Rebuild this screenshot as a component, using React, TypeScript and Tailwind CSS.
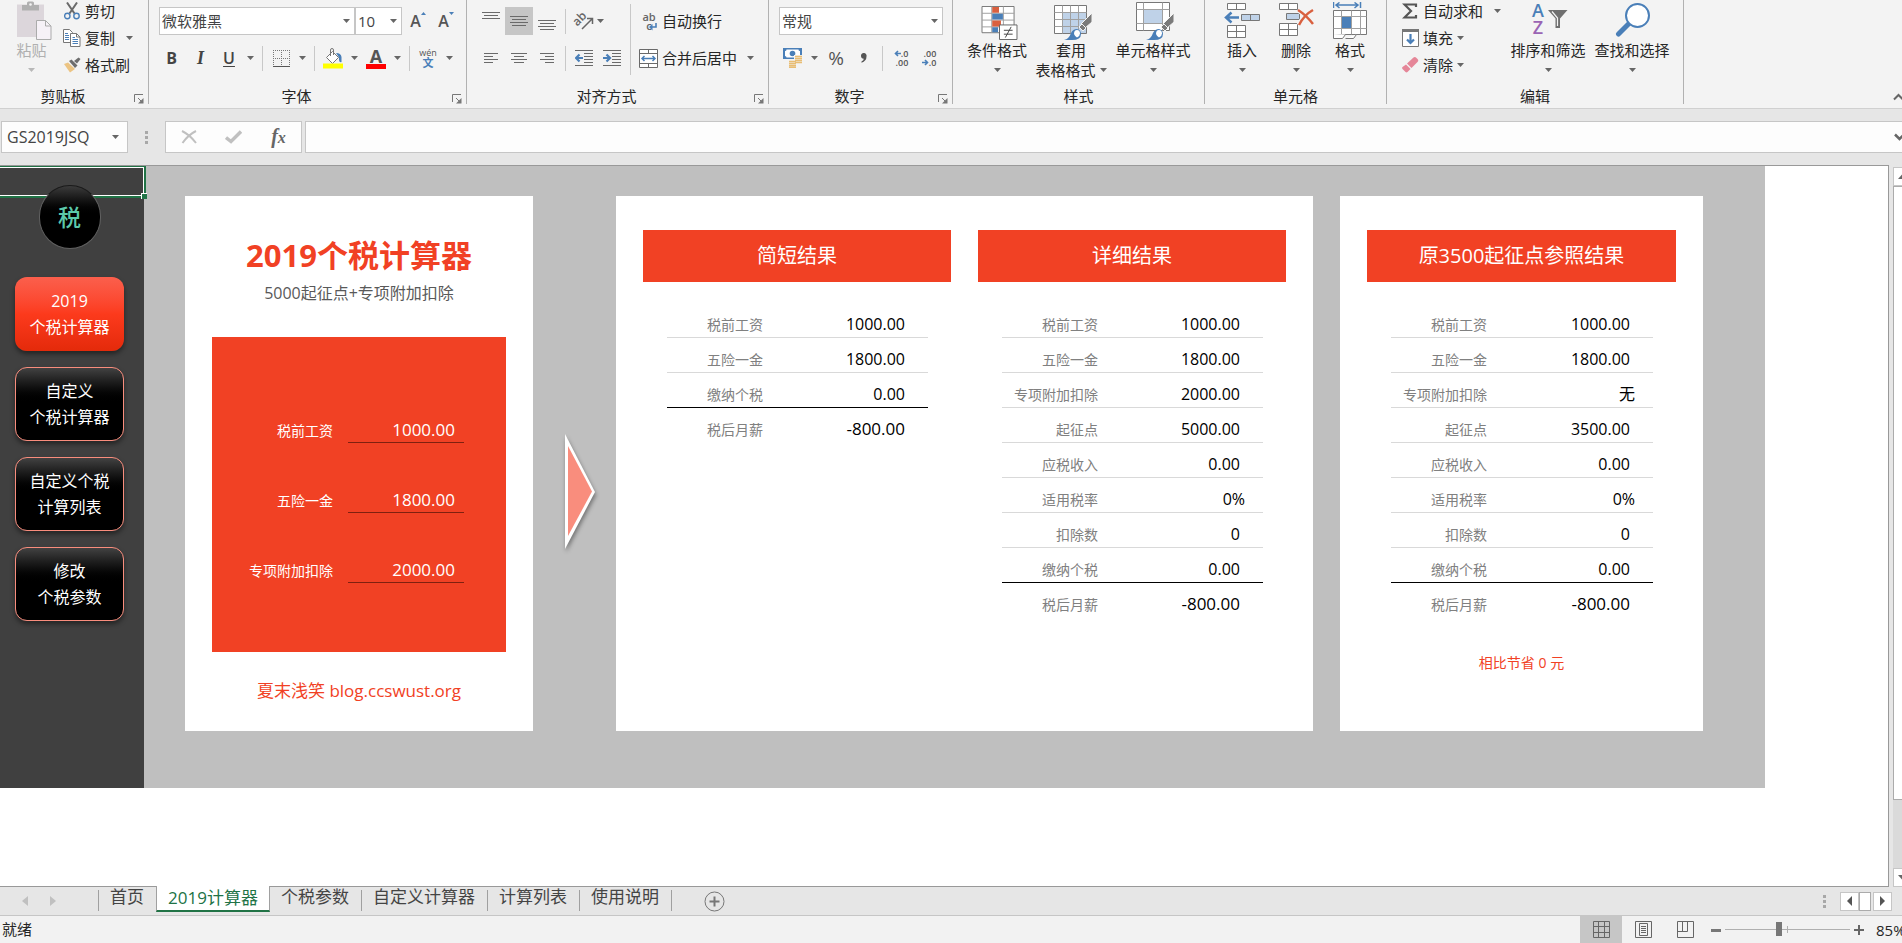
import type { ReactNode } from "react";

type Row = { label: string; value: string; kind?: "plain" | "total" };

const briefRows: Row[] = [
  { label: "税前工资", value: "1000.00" },
  { label: "五险一金", value: "1800.00" },
  { label: "缴纳个税", value: "0.00" },
  { label: "税后月薪", value: "-800.00", kind: "total" },
];

const detailRows: Row[] = [
  { label: "税前工资", value: "1000.00" },
  { label: "五险一金", value: "1800.00" },
  { label: "专项附加扣除", value: "2000.00" },
  { label: "起征点", value: "5000.00" },
  { label: "应税收入", value: "0.00" },
  { label: "适用税率", value: "0%", kind: "plain" },
  { label: "扣除数", value: "0" },
  { label: "缴纳个税", value: "0.00" },
  { label: "税后月薪", value: "-800.00", kind: "total" },
];

const oldRows: Row[] = [
  { label: "税前工资", value: "1000.00" },
  { label: "五险一金", value: "1800.00" },
  { label: "专项附加扣除", value: "无", kind: "plain" },
  { label: "起征点", value: "3500.00" },
  { label: "应税收入", value: "0.00" },
  { label: "适用税率", value: "0%", kind: "plain" },
  { label: "扣除数", value: "0" },
  { label: "缴纳个税", value: "0.00" },
  { label: "税后月薪", value: "-800.00", kind: "total" },
];

const inputs = [
  { id: "salary", label: "税前工资", value: "1000.00" },
  { id: "insurance", label: "五险一金", value: "1800.00" },
  { id: "deduction", label: "专项附加扣除", value: "2000.00" },
];

const navItems = [
  { lines: ["2019", "个税计算器"], active: true },
  { lines: ["自定义", "个税计算器"], active: false },
  { lines: ["自定义个税", "计算列表"], active: false },
  { lines: ["修改", "个税参数"], active: false },
];

const sheets = ["首页", "2019计算器", "个税参数", "自定义计算器", "计算列表", "使用说明"];

/* ---------- ribbon primitives ---------- */

function Caret({ light = false }: { light?: boolean }) {
  return (
    <svg className={light ? "h-1 w-[7px] shrink-0 text-[#b8b8b8]" : "h-1 w-[7px] shrink-0 text-[#666]"} viewBox="0 0 7 4" aria-hidden="true">
      <path d="M0 0h7L3.5 4z" fill="currentColor" />
    </svg>
  );
}

function Group({ label, width, launcher = false, children }: { label: string; width: string; launcher?: boolean; children: ReactNode }) {
  return (
    <section className={`flex h-[104px] shrink-0 flex-col justify-between border-r border-[#b1b1b1] ${width}`} aria-label={label}>
      {children}
      <div className="flex h-[15px]">
        <h2 className="flex-1 text-center leading-[14px]">{label}</h2>
        {launcher && (
          <button type="button" aria-label={`${label}设置`} className="flex w-[22px] items-end justify-end pr-1">
            <svg width="10" height="10" viewBox="0 0 10 10" fill="none" stroke="#777" aria-hidden="true">
              <path d="M.5 8V.5H9M4 4l4 4" />
              <path d="M9.5 4v5.5H4z" fill="#777" stroke="none" />
            </svg>
          </button>
        )}
      </div>
    </section>
  );
}

function Tool({ label, wide = false, pressed = false, children }: { label: string; wide?: boolean; pressed?: boolean; children: ReactNode }) {
  return (
    <button
      type="button"
      aria-label={label}
      className={`flex h-7 items-center justify-center ${wide ? "w-[29px]" : "w-7"} ${pressed ? "bg-[#c6c6c6]" : ""}`}
    >
      {children}
    </button>
  );
}

function Split({ label, children }: { label: string; children: ReactNode }) {
  return (
    <button type="button" aria-label={label} className="flex h-7 w-[43px] items-center">
      <span className="flex w-7 justify-center">{children}</span>
      <span className="flex w-[15px] justify-center">
        <Caret />
      </span>
    </button>
  );
}

function Rule() {
  return <span className="mx-1 h-[25px] w-px shrink-0 bg-[#c8c8c8]" />;
}

function BigTool({ label, second, width, light = false, icon }: { label: string; second?: string; width: string; light?: boolean; icon: ReactNode }) {
  return (
    <button type="button" className={`flex flex-col items-center whitespace-nowrap ${light ? "text-[#b0b0b0]" : ""} ${width}`}>
      <span className="flex h-10 items-start justify-center">{icon}</span>
      <span className="h-5 leading-5">{label}</span>
      <span className="flex h-5 items-center gap-1 leading-5">
        {second}
        <Caret light={light} />
      </span>
    </button>
  );
}

function SmallTool({ label, caret = "none", icon }: { label: string; caret?: "none" | "near" | "far"; icon: ReactNode }) {
  return (
    <button type="button" className="flex h-6 items-center whitespace-nowrap">
      <span className="flex w-[18px] justify-center">{icon}</span>
      <span className="ml-1">{label}</span>
      {caret !== "none" && (
        <span className={caret === "far" ? "ml-[11px] flex" : "ml-1 flex"}>
          <Caret />
        </span>
      )}
    </button>
  );
}

function Dropdown({ label, value, width }: { label: string; value: string; width: string }) {
  return (
    <span className={`relative flex h-7 items-center border border-[#c6c6c6] bg-white ${width}`}>
      <select aria-label={label} defaultValue={value} className="h-full w-full appearance-none bg-transparent pl-[2px] text-[15px] text-[#444] outline-none">
        <option>{value}</option>
      </select>
      <span className="pointer-events-none absolute right-1 flex">
        <Caret />
      </span>
    </span>
  );
}

function Lines({ d }: { d: string }) {
  return (
    <svg className="h-[18px] w-[18px]" viewBox="0 0 18 18" stroke="#6a6a6a" fill="none" aria-hidden="true">
      <path d={d} />
    </svg>
  );
}

/* ---------- ribbon icons ---------- */

const PasteIcon = (
  <svg className="ml-[6px]" width="35" height="41" viewBox="0 0 35 41" aria-hidden="true">
    <path d="M0 4.500h27V37H0z" fill="#dcd6db" />
    <path d="M5 5h5V3q0-1.500 1.500-1.500h4q1.500 0 1.500 1.500v2h5v5.500H5z" fill="#b0b0b0" />
    <circle cx="13.500" cy="4.500" r="1.300" fill="#f3f3f3" />
    <path d="M19.500 20.500h9l5.500 5.500v13.500H19.500z" fill="#f6f1f7" stroke="#ababab" />
    <path d="M28.500 20.500V26H34" fill="none" stroke="#ababab" />
  </svg>
);

const CutIcon = (
  <svg width="16" height="18" viewBox="0 0 16 18" fill="none" aria-hidden="true">
    <path d="M3 .5l7.500 11M13 .5L5.500 11.500" stroke="#6a6a6a" strokeWidth="2" />
    <circle cx="3.300" cy="14" r="2.700" stroke="#4a7fb8" strokeWidth="1.400" />
    <circle cx="12.500" cy="14" r="2.700" stroke="#4a7fb8" strokeWidth="1.400" />
  </svg>
);

const CopyIcon = (
  <svg width="18" height="18" viewBox="0 0 18 18" aria-hidden="true">
    <path d="M.5.5h6L9.500 3.500v10h-9z" fill="#fff" stroke="#777" />
    <path d="M7.500 4.500h6l3.500 3.500v9.500H7.500z" fill="#fff" stroke="#777" />
    <path d="M13.500 4.500V8H17" fill="none" stroke="#777" />
    <path d="M2 4.500h3M2 6.500h4M2 8.500h4M2 10.500h4M9.500 8.500h2.500M9.500 10.500h5.500M9.500 12.500h5.500M9.500 14.500h5.500" stroke="#4a7fb8" />
  </svg>
);

const PainterIcon = (
  <svg width="18" height="16" viewBox="0 0 18 16" aria-hidden="true">
    <path d="M1 7l4-1.500L12 12l-5 3.500z" fill="#ecc483" />
    <path d="M6 4l2.500-1.500 6 6L12 11z" fill="#6d6d6d" />
    <path d="M11 4l4.500-3.500L17.500 2 14 6.500z" fill="#6d6d6d" />
  </svg>
);

const FillColorIcon = (
  <svg width="20" height="21" viewBox="0 0 20 21" aria-hidden="true">
    <path d="M3.500 9.500l6-6 6 6-6 6z" fill="#fff" stroke="#777" />
    <path d="M7.500 8V2q0-1.500 1.500-1.500t1.500 1.500v5" fill="none" stroke="#777" />
    <path d="M13 5q5 0 5.500 4v5q-2 1-2.500-2V9.500z" fill="#4a7fb8" />
    <path d="M0 15.500h20v5H0z" fill="#ff0" />
  </svg>
);

const MoneyIcon = (
  <svg width="20" height="20" viewBox="0 0 20 20" aria-hidden="true">
    <path d="M0 0h19v11H0z" fill="#4a7fb8" />
    <path d="M2 3q1.500 0 1.500-1.500h12Q15.500 3 17 3v5q-1.500 0-1.500 1.500h-12Q3.500 8 2 8z" fill="#fff" />
    <circle cx="9.500" cy="5.500" r="2.800" fill="#4a7fb8" />
    <path d="M11 7h9v10h-7v3H5v-8h6z" fill="#f3f3f3" />
    <path d="M12 8.500h7M12 10.500h7M12 12.500h7M12 14.500h7M6 13.500h7M6 15.500h7M6 17.500h7M6 19.300h7" stroke="#e8bd74" strokeWidth="1.400" />
  </svg>
);

const MergeIcon = (
  <svg width="19" height="19" viewBox="0 0 19 19" fill="none" aria-hidden="true">
    <path d="M.5.5h18v18H.5zM.5 4.500h18M.5 14.500h18M9.500.5v4M9.500 14.500v4" fill="#fff" stroke="#6a6a6a" />
    <path d="M3 9.500h13M5.500 7L3 9.500 5.500 12M13.500 7L16 9.500 13.500 12" stroke="#4a7fb8" strokeWidth="1.500" />
  </svg>
);

const WrapIcon = (
  <span className="relative flex flex-col text-[11px] leading-[9px] font-semibold text-[#666]">
    <span>ab</span>
    <span>c</span>
    <svg className="absolute right-[-1px] bottom-[-1px]" width="8" height="8" viewBox="0 0 8 8" aria-hidden="true">
      <path d="M7 0v4H3" fill="none" stroke="#4a7fb8" strokeWidth="1.600" />
      <path d="M3.500 1v6.500L0 4z" fill="#4a7fb8" />
    </svg>
  </span>
);

const CondIcon = (
  <svg className="ml-1 mt-[6px]" width="37" height="34" viewBox="0 0 37 35" aria-hidden="true">
    <path d="M.5.5h33v27H.5z" fill="#fff" stroke="#777" />
    <path d="M.5 7.500h33M.5 14.500h33M.5 21.500h33M10.500.5v27M22.500.5v27" stroke="#a0a0a0" />
    <path d="M11 1h7v6h-7zM11 15h9v6h-9z" fill="#d9603f" />
    <path d="M11 8h11v6H11zM11 22h6v5h-6z" fill="#4a7fb8" />
    <path d="M18.500 19.500h18v15h-18z" fill="#fff" stroke="#666" />
    <path d="M23 25h9M23 29h9M30.500 21.500l-6 11" stroke="#444" />
  </svg>
);

const Brush = (
  <g>
    <path d="M38 8v9l-7 6-4-4z" fill="#7a7a7a" stroke="#f3f3f3" />
    <path d="M28 19l4 4-3 3-4-4z" fill="#7a7a7a" stroke="#f3f3f3" />
    <path d="M10 35q5-1 7-7 2-4 6-4 4 1 4 5 0 6-9 6z" fill="#4a7fb8" />
    <path d="M20 29q0-4 3-4 3 0 3 3.500 0 2.500-3 4-2-1-3-3.500z" fill="#fff" />
  </g>
);

const TableStyleIcon = (
  <svg className="ml-1 mt-[5px]" width="38" height="36" viewBox="0 0 38 36" aria-hidden="true">
    <path d="M.5.5h32v28H.5z" fill="#fff" stroke="#777" />
    <path d="M9 8h23v20H9z" fill="#bfd2e8" />
    <path d="M.5 7.500h32M.5 14.500h32M.5 21.500h32M8.500.5v28M16.500.5v28M24.500.5v28" stroke="#a0a0a0" />
    {Brush}
  </svg>
);

const CellStyleIcon = (
  <svg className="ml-1 mt-[2px]" width="38" height="39" viewBox="0 0 38 39" aria-hidden="true">
    <path d="M.5.5h33v28H.5z" fill="#fff" stroke="#777" />
    <path d="M.5 7.500h33M.5 21.500h33M7.500.5v28M26.500.5v28" stroke="#a0a0a0" />
    <path d="M8 8h18v13H8z" fill="#bfd2e8" />
    <g transform="translate(0 3)">{Brush}</g>
  </svg>
);

const InsertIcon = (
  <svg className="mt-[3px]" width="36" height="36" viewBox="0 0 36 36" aria-hidden="true">
    <path d="M3.500.5h18v6h-18zM12.500.5v6M3.500 22.500h18v12h-18zM3.500 28.500h18M12.500 22.500v12" fill="#fff" stroke="#777" />
    <path d="M17.500 11.500h18v6h-18zM26.500 11.500v6" fill="#bfd2e8" stroke="#777" />
    <path d="M15 14.500H2M7.500 9.500l-5.500 5 5.500 5" fill="none" stroke="#4a7fb8" strokeWidth="2.500" />
  </svg>
);

const DeleteIcon = (
  <svg className="ml-[2px] mt-[3px]" width="36" height="36" viewBox="0 0 36 36" aria-hidden="true">
    <path d="M.5.5h18v6H.5zM9.500.5v6M.5 20.500h18v12H.5zM.5 26.500h18M9.500 20.500v12" fill="#fff" stroke="#777" />
    <path d="M7.500 10.500h13v6h-13z" fill="#bfd2e8" stroke="#777" />
    <path d="M19 7q8 5 15 14M34 7q-9 5-14 15" fill="none" stroke="#f3f3f3" strokeWidth="5" />
    <path d="M19 7q8 5 15 14M34 7q-9 5-14 15" fill="none" stroke="#d9603f" strokeWidth="2.500" />
  </svg>
);

const FormatIcon = (
  <svg className="mt-[2px]" width="34" height="38" viewBox="0 0 34 38" aria-hidden="true">
    <path d="M.5 0v6M27.500 0v6M3 3h22M6.500.5L3 3l3.500 3M21.500.5L25 3l-3.500 3" fill="none" stroke="#4a7fb8" strokeWidth="1.500" />
    <path d="M.5 8.500h33v24H.5z" fill="#fff" stroke="#777" />
    <path d="M.5 14.500h33M.5 26.500h33M8.500 8.500v24M18.500 8.500v24M27.500 8.500v24" stroke="#a0a0a0" />
    <path d="M9 15h9v11H9z" fill="#4a7fb8" />
    <path d="M.5 32v4.500h9l3-4M12.500 36.500h8l3-4" fill="#fff" stroke="#777" />
  </svg>
);

const SortIcon = (
  <span className="ml-1 flex gap-1 pt-[2px]">
    <span className="flex flex-col text-[18px] leading-[17px] font-semibold">
      <span className="text-[#4a7fb8]">A</span>
      <span className="text-[#9a64b4]">Z</span>
    </span>
    <svg className="mt-2" width="20" height="19" viewBox="0 0 20 19" aria-hidden="true">
      <path d="M0 0h19.500L12 8.500V18H7.500V8.500z" fill="#6f6f6f" />
      <path d="M4 1.500l5.500 6.500v8" fill="none" stroke="#f3f3f3" strokeWidth="1.200" />
    </svg>
  </span>
);

const FindIcon = (
  <svg className="ml-[2px] mt-[2px]" width="36" height="36" viewBox="0 0 36 36" aria-hidden="true">
    <path d="M3.500 32L15 20.500" stroke="#4a7fb8" strokeWidth="5" strokeLinecap="round" />
    <circle cx="22.500" cy="13.500" r="11.500" fill="#fff" stroke="#4a7fb8" strokeWidth="2" />
  </svg>
);

function Ribbon() {
  return (
    <header className="flex h-[109px] shrink-0 justify-between border-b border-[#d0d0d0] bg-[#f3f3f3]">
      <div className="flex">
        <Group label="剪贴板" width="w-[149px]" launcher>
          <div className="flex">
            <BigTool label="粘贴" width="w-[63px]" light icon={PasteIcon} />
            <div className="-mt-px flex flex-col gap-[3px]">
              <SmallTool label="剪切" icon={CutIcon} />
              <SmallTool label="复制" caret="far" icon={CopyIcon} />
              <SmallTool label="格式刷" icon={PainterIcon} />
            </div>
          </div>
        </Group>

        <Group label="字体" width="w-[318px]" launcher>
          <div className="flex flex-col gap-[9px] pt-[7px]">
            <div className="flex pl-[10px]">
              <Dropdown label="字体" value="微软雅黑" width="w-[196px]" />
              <Dropdown label="字号" value="10" width="w-[47px]" />
              <div className="flex pl-[2px] text-[16px] font-semibold text-[#555]">
                <Tool label="增大字号">
                  <span>A</span>
                  <svg className="mb-4" width="5" height="3" viewBox="0 0 5 3" aria-hidden="true">
                    <path d="M0 3l2.500-3L5 3z" fill="#4a7fb8" />
                  </svg>
                </Tool>
                <Tool label="减小字号">
                  <span>A</span>
                  <svg className="mb-4" width="5" height="3" viewBox="0 0 5 3" aria-hidden="true">
                    <path d="M0 0l2.500 3L5 0z" fill="#4a7fb8" />
                  </svg>
                </Tool>
              </div>
            </div>
            <div className="flex items-center pl-2 text-[16px] text-[#444]">
              <Tool label="加粗" wide>
                <span className="font-bold">B</span>
              </Tool>
              <Tool label="倾斜" wide>
                <span className="font-['Liberation_Serif',serif] text-[18px] font-bold italic">I</span>
              </Tool>
              <Split label="下划线">
                <span className="font-semibold underline underline-offset-2">U</span>
              </Split>
              <Rule />
              <Split label="边框">
                <svg width="17" height="17" viewBox="0 0 17 17" fill="none" stroke="#777" aria-hidden="true">
                  <path d="M0 .5h17M.5 0v16M16.500 0v16M8.500 0v16M0 8.500h17" strokeDasharray="1 1" />
                  <path d="M0 16.500h17" stroke="#555" />
                </svg>
              </Split>
              <Rule />
              <Split label="填充颜色">{FillColorIcon}</Split>
              <Split label="字体颜色">
                <span className="flex flex-col items-center">
                  <span className="text-[18px] leading-4 font-bold text-[#555]">A</span>
                  <span className="h-[5px] w-5 bg-[#f00]" />
                </span>
              </Split>
              <Rule />
              <Split label="拼音指南">
                <span className="flex flex-col items-center">
                  <span className="text-[9px] leading-[9px] text-[#555]">wén</span>
                  <span className="text-[11px] leading-[11px] font-bold text-[#4a7fb8]">文</span>
                </span>
              </Split>
            </div>
          </div>
        </Group>

        <Group label="对齐方式" width="w-[302px]" launcher>
          <div className="flex pl-[10px]">
            <div className="flex flex-col gap-[9px] pt-[7px]">
              <div className="flex items-center">
                <Tool label="顶端对齐">
                  <Lines d="M0 .5h18M2 3.500h14M0 6.500h18" />
                </Tool>
                <Tool label="垂直居中" pressed>
                  <Lines d="M0 4.500h18M2 7.500h14M0 10.500h18M2 13.500h14" />
                </Tool>
                <Tool label="底端对齐">
                  <Lines d="M0 8.500h18M2 11.500h14M0 14.500h18M2 17.500h14" />
                </Tool>
                <Rule />
                <button type="button" aria-label="方向" className="flex h-7 w-14 items-center gap-1 pl-[5px]">
                  <svg className="overflow-visible" width="18" height="18" viewBox="0 0 18 18" aria-hidden="true">
                    <text x="-1" y="11" fontSize="12" fontWeight="600" fill="#666" transform="rotate(-45 5 9)">
                      ab
                    </text>
                    <path d="M7 17L17 7M12 6.500h5.500V12" fill="none" stroke="#666" strokeWidth="1.500" />
                  </svg>
                  <Caret />
                </button>
              </div>
              <div className="flex items-center">
                <Tool label="左对齐">
                  <Lines d="M2 4.500h14M2 7.500h9M2 10.500h14M2 13.500h9" />
                </Tool>
                <Tool label="居中">
                  <Lines d="M1 4.500h16M4 7.500h10M1 10.500h16M4 13.500h10" />
                </Tool>
                <Tool label="右对齐">
                  <Lines d="M2 4.500h14M7 7.500h9M2 10.500h14M7 13.500h9" />
                </Tool>
                <Rule />
                <Tool label="减少缩进量">
                  <svg width="18" height="18" viewBox="0 0 18 18" fill="none" aria-hidden="true">
                    <path d="M0 1.500h18M9 4.500h9M9 7.500h9M9 10.500h9M9 13.500h9M0 16.500h18" stroke="#6a6a6a" />
                    <path d="M8 9H1.500M4.500 5.500L1 9l3.500 3.500" stroke="#4a7fb8" strokeWidth="2.200" />
                  </svg>
                </Tool>
                <Tool label="增加缩进量">
                  <svg width="18" height="18" viewBox="0 0 18 18" fill="none" aria-hidden="true">
                    <path d="M0 1.500h18M9 4.500h9M9 7.500h9M9 10.500h9M9 13.500h9M0 16.500h18" stroke="#6a6a6a" />
                    <path d="M0 9h6.500M3.500 5.500L7 9l-3.500 3.500" stroke="#4a7fb8" strokeWidth="2.200" />
                  </svg>
                </Tool>
              </div>
            </div>
            <span className="mx-1 mt-1 h-[71px] w-px bg-[#c8c8c8]" />
            <div className="flex flex-col gap-[9px] pt-[7px] pl-1 whitespace-nowrap">
              <button type="button" className="flex h-7 items-center gap-[3px]">
                <span className="flex w-5 justify-center">{WrapIcon}</span>
                自动换行
              </button>
              <button type="button" className="flex h-7 items-center gap-[3px]">
                <span className="flex w-5">{MergeIcon}</span>
                合并后居中
                <span className="ml-[7px] flex">
                  <Caret />
                </span>
              </button>
            </div>
          </div>
        </Group>

        <Group label="数字" width="w-[184px]" launcher>
          <div className="flex flex-col gap-[9px] pt-[7px] pl-[10px]">
            <Dropdown label="数字格式" value="常规" width="w-[164px]" />
            <div className="flex items-center text-[#555]">
              <Split label="会计数字格式">{MoneyIcon}</Split>
              <Tool label="百分比样式">
                <span className="text-[19px]">%</span>
              </Tool>
              <Tool label="千位分隔样式">
                <svg width="6" height="10" viewBox="0 0 6 10" aria-hidden="true">
                  <path d="M0 3a2.800 2.800 0 1 1 5.500.5Q5.500 8 .5 9.800V8.500Q2.800 7.500 2.800 5.700 0 5.500 0 3z" fill="#555" />
                </svg>
              </Tool>
              <Rule />
              <Tool label="增加小数位数">
                <span className="flex flex-col items-end text-[9px] leading-[9px] font-semibold">
                  <span className="flex items-center">
                    <svg width="7" height="7" viewBox="0 0 7 7" aria-hidden="true">
                      <path d="M7 3.500H1.500M4 1L1.500 3.500 4 6" fill="none" stroke="#4a7fb8" strokeWidth="1.600" />
                    </svg>
                    .0
                  </span>
                  <span>.00</span>
                </span>
              </Tool>
              <Tool label="减少小数位数">
                <span className="flex flex-col items-end text-[9px] leading-[9px] font-semibold">
                  <span>.00</span>
                  <span className="flex items-center">
                    <svg width="7" height="7" viewBox="0 0 7 7" aria-hidden="true">
                      <path d="M0 3.500h5.500M3 1l2.500 2.500L3 6" fill="none" stroke="#4a7fb8" strokeWidth="1.600" />
                    </svg>
                    .0
                  </span>
                </span>
              </Tool>
            </div>
          </div>
        </Group>

        <Group label="样式" width="w-[252px]">
          <div className="flex pl-[9px]">
            <BigTool label="条件格式" width="w-[70px]" icon={CondIcon} />
            <BigTool label="套用" second="表格格式" width="w-[78px]" icon={TableStyleIcon} />
            <BigTool label="单元格样式" width="w-[86px]" icon={CellStyleIcon} />
          </div>
        </Group>

        <Group label="单元格" width="w-[182px]">
          <div className="flex pl-[10px]">
            <BigTool label="插入" width="w-[54px]" icon={InsertIcon} />
            <BigTool label="删除" width="w-[54px]" icon={DeleteIcon} />
            <BigTool label="格式" width="w-[54px]" icon={FormatIcon} />
          </div>
        </Group>

        <Group label="编辑" width="w-[297px]">
          <div className="flex pl-[14px]">
            <div className="-mt-px flex w-[105px] flex-col gap-[3px]">
              <SmallTool
                label="自动求和"
                caret="far"
                icon={
                  <svg width="16" height="16" viewBox="0 0 16 16" fill="none" stroke="#555" strokeWidth="2.200" aria-hidden="true">
                    <path d="M14 4V1.500H2.500L9 8l-6.500 6.500H14V12" />
                  </svg>
                }
              />
              <SmallTool
                label="填充"
                caret="near"
                icon={
                  <svg width="17" height="18" viewBox="0 0 17 18" fill="none" aria-hidden="true">
                    <path d="M.5.5h16v17H.5z" fill="#fff" stroke="#777" />
                    <path d="M0 0h17v3H0z" fill="#777" />
                    <path d="M8.500 5v9M5 10.500L8.500 14l3.500-3.500" stroke="#4a7fb8" strokeWidth="2.200" />
                  </svg>
                }
              />
              <SmallTool
                label="清除"
                caret="near"
                icon={
                  <svg width="17" height="16" viewBox="0 0 17 16" aria-hidden="true">
                    <path d="M5 6.500L11.500.5q1.500-1 3 .5l1 1q1.500 1.500 0 3L9.500 11z" fill="#e58698" />
                    <path d="M4 7.500l4.500 4.500L5.500 15q-1 .8-2 0l-3-3q-.8-1 0-2z" fill="#e58698" />
                  </svg>
                }
              />
            </div>
            <BigTool label="排序和筛选" width="w-[84px]" icon={SortIcon} />
            <BigTool label="查找和选择" width="w-[84px]" icon={FindIcon} />
          </div>
        </Group>
      </div>
      <button type="button" aria-label="折叠功能区" className="flex w-[9px] items-end overflow-hidden pb-[7px]">
        <svg className="h-2 w-[11px] shrink-0" viewBox="0 0 11 8" fill="none" stroke="#666" strokeWidth="2" aria-hidden="true">
          <path d="M1 6.500l4.500-4.500L10 6.500" />
        </svg>
      </button>
    </header>
  );
}

function Dots() {
  return (
    <svg width="3" height="13" viewBox="0 0 3 13" fill="#a8a8a8" aria-hidden="true">
      <path d="M0 0h3v3H0zM0 5h3v3H0zM0 10h3v3H0z" />
    </svg>
  );
}

function FormulaBar() {
  return (
    <div className="flex h-14 shrink-0 items-start bg-[#e6e6e6] pt-3 pl-px">
      <label className="relative flex h-8 w-[127px] items-center border border-[#c6c6c6] bg-[#fdfdfd]">
        <input aria-label="名称框" defaultValue="GS2019JSQ" className="w-full bg-transparent pl-[5px] text-[16px] text-[#444] outline-none" />
        <span className="absolute right-2 flex">
          <Caret />
        </span>
      </label>
      <span className="flex h-8 w-[37px] items-center justify-center">
        <Dots />
      </span>
      <div className="flex h-8 w-[137px] items-center justify-around border border-[#c6c6c6] bg-[#fdfdfd]">
        <button type="button" aria-label="取消" className="flex w-8 justify-center">
          <svg width="16" height="14" viewBox="0 0 16 14" fill="none" stroke="#c0c0c0" strokeWidth="2" aria-hidden="true">
            <path d="M1 1q8 4 14 12M15 1Q7 5 1.500 13" />
          </svg>
        </button>
        <button type="button" aria-label="输入" className="flex w-8 justify-center">
          <svg width="17" height="14" viewBox="0 0 17 14" fill="none" stroke="#c0c0c0" strokeWidth="3.500" aria-hidden="true">
            <path d="M1 7.500l5 4L16 1.500" />
          </svg>
        </button>
        <button type="button" aria-label="插入函数" className="w-8 font-['Liberation_Serif',serif] text-[20px] leading-6 font-bold text-[#666] italic">
          f<span className="text-[16px]">x</span>
        </button>
      </div>
      <div className="ml-[3px] flex h-8 flex-1 items-center overflow-hidden border-y border-l border-[#c6c6c6] bg-[#fdfdfd]">
        <input aria-label="编辑栏" className="h-full min-w-0 flex-1 bg-transparent px-2 text-[15px] outline-none" />
        <button type="button" aria-label="展开编辑栏" className="w-2 overflow-hidden">
          <svg className="h-2 w-[11px]" viewBox="0 0 11 8" fill="none" stroke="#666" strokeWidth="2.500" aria-hidden="true">
            <path d="M1 1.500L5.500 6 10 1.500" />
          </svg>
        </button>
      </div>
    </div>
  );
}

function Sidebar() {
  return (
    <nav className="relative flex w-36 shrink-0 flex-col items-center bg-[#404040] pt-[19px] pr-[5px]">
      <div className="pointer-events-none absolute top-0 left-0 h-8 w-[146px] border-t border-r-2 border-b-2 border-[#217346]">
        <div className="h-full border-t border-r border-b border-white" />
        <span className="absolute -right-[3px] -bottom-[3px] h-[6px] w-[6px] border-t border-l border-white bg-[#217346]" />
      </div>
      <div className="relative flex h-16 w-[62px] items-center justify-center rounded-full border border-[#606060] border-t-[#1a1a1a] bg-linear-to-b from-[#3c3c3c] to-black to-50% text-[23px] font-medium text-[#5cc9ab]">
        税
      </div>
      <ul className="mt-7 flex flex-col gap-4">
        {navItems.map((item) => (
          <li key={item.lines.join("")}>
            <button
              type="button"
              className={`flex h-[74px] w-[109px] flex-col items-center justify-center rounded-xl text-[16px] leading-[26px] text-white shadow-[0_3px_5px_rgba(0,0,0,0.45)] ${
                item.active
                  ? "bg-linear-to-b from-[#fb5f4c] via-[#fc3a1c] to-[#e42a0a]"
                  : "border border-[#f98d7d] bg-linear-to-b from-[#424242] to-black to-50%"
              }`}
            >
              {item.lines.map((line) => (
                <span key={line}>{line}</span>
              ))}
            </button>
          </li>
        ))}
      </ul>
    </nav>
  );
}

function Result({ title, rows }: { title: string; rows: Row[] }) {
  return (
    <section>
      <h3 className="flex h-[52px] items-center justify-center bg-[#f14124] text-[20px] text-white">{title}</h3>
      <div className="mt-5 pr-[23px] pl-6">
        <table className="w-full table-fixed border-collapse">
          <tbody>
            {rows.map((row, i) => (
              <tr
                key={row.label}
                className={`h-[35px] ${i === rows.length - 1 ? "" : i === rows.length - 2 ? "border-b border-black" : "border-b border-[#d9d9d9]"}`}
              >
                <th scope="row" className="w-24 p-0 text-right align-bottom text-[14px] leading-6 font-normal whitespace-nowrap text-[#808080]">
                  {row.label}
                </th>
                <td
                  className={`p-0 text-right align-bottom leading-[26px] text-black ${
                    row.kind === "plain" ? "pr-[18px] text-[16px]" : row.kind === "total" ? "pr-[23px] text-[17px]" : "pr-[23px] text-[16px]"
                  }`}
                >
                  {row.value}
                </td>
              </tr>
            ))}
          </tbody>
        </table>
      </div>
    </section>
  );
}

function Sheet() {
  return (
    <main className="grid min-w-0 flex-1 grid-cols-[348fr_83px_697fr_27px_363fr] bg-[#bfbfbf] pt-[30px] pr-[62px] pb-[57px] pl-[41px]">
      <section className="bg-white px-[27px] pt-10 pb-7 text-center">
        <h1 className="text-[31px] leading-[38px] font-bold whitespace-nowrap text-[#f14124]">2019个税计算器</h1>
        <p className="mt-[7px] text-[16px] leading-6 whitespace-nowrap text-[#595959]">5000起征点+专项附加扣除</p>
        <form className="mt-8 h-[315px] bg-[#f14124] pt-9 pr-[42px] text-white">
          {inputs.map((field) => (
            <div key={field.id} className="flex h-[70px] items-end justify-end gap-[15px]">
              <label htmlFor={field.id} className="text-[14px] leading-6 whitespace-nowrap">
                {field.label}
              </label>
              <input
                id={field.id}
                defaultValue={field.value}
                className="h-[26px] w-[116px] border-b border-[#80200f] bg-transparent pr-[9px] text-right text-[17px] outline-none"
              />
            </div>
          ))}
        </form>
        <p className="mt-[27px] text-[17px] leading-6 whitespace-nowrap text-[#f14124]">夏末浅笑 blog.ccswust.org</p>
      </section>

      <div className="pt-[233px] pl-[27px]">
        <svg className="overflow-visible drop-shadow-[1px_3px_2px_rgba(0,0,0,0.4)]" width="40" height="124" viewBox="0 0 40 124" aria-hidden="true">
          <path d="M5 5v115l30-57z" fill="#fff" />
          <path d="M8 17v90l24-44.500z" fill="#f98d7d" />
        </svg>
      </div>

      <section className="grid grid-cols-2 gap-[27px] bg-white px-[27px] pt-[34px]">
        <Result title="简短结果" rows={briefRows} />
        <Result title="详细结果" rows={detailRows} />
      </section>

      <span />

      <section className="bg-white px-[27px] pt-[34px]">
        <Result title="原3500起征点参照结果" rows={oldRows} />
        <p className="mt-9 text-center text-[14px] leading-5 text-[#f14124]">相比节省 0 元</p>
      </section>
    </main>
  );
}

function VerticalScroll() {
  return (
    <div className="flex w-[13px] shrink-0 flex-col overflow-hidden pt-[2px] pl-1">
      <button type="button" aria-label="向上滚动" className="flex h-[19px] w-[19px] shrink-0 items-center justify-center border border-[#c6c6c6] bg-white">
        <svg width="9" height="5" viewBox="0 0 9 5" aria-hidden="true">
          <path d="M0 5h9L4.500 0z" fill="#666" />
        </svg>
      </button>
      <div className="flex w-[19px] flex-1 flex-col bg-[#dadada]">
        <div className="h-[90%] border border-[#ababab] bg-white" />
      </div>
      <button type="button" aria-label="向下滚动" className="flex h-[19px] w-[19px] shrink-0 items-center justify-center border border-[#c6c6c6] bg-white">
        <svg width="9" height="5" viewBox="0 0 9 5" aria-hidden="true">
          <path d="M0 0h9L4.500 5z" fill="#666" />
        </svg>
      </button>
    </div>
  );
}

function SheetTabs() {
  return (
    <div className="flex h-7 shrink-0 justify-between bg-[#e6e6e6]">
      <div className="flex">
        <div className="flex w-[98px] items-center gap-[22px] pl-[22px]">
          <button type="button" aria-label="上一个工作表">
            <svg width="6" height="10" viewBox="0 0 6 10" aria-hidden="true">
              <path d="M6 0v10L0 5z" fill="#c0c0c0" />
            </svg>
          </button>
          <button type="button" aria-label="下一个工作表">
            <svg width="6" height="10" viewBox="0 0 6 10" aria-hidden="true">
              <path d="M0 0v10l6-5z" fill="#c0c0c0" />
            </svg>
          </button>
        </div>
        <span className="mt-[3px] h-[21px] w-px bg-[#a0a0a0]" />
        {sheets.map((name) =>
          name === "2019计算器" ? (
            <button
              key={name}
              type="button"
              className="z-10 -mt-px h-[26px] border-x border-b-2 border-x-[#a0a0a0] border-b-[#217346] bg-white px-[11px] text-[17px] leading-5 whitespace-nowrap text-[#217346]"
            >
              {name}
            </button>
          ) : (
            <span key={name} className="flex">
              <button type="button" className="flex h-[21px] pr-3 pl-[11px] text-[17px] leading-5 whitespace-nowrap text-[#444]">
                {name}
              </button>
              {name !== "首页" && <span className="mt-[3px] h-[21px] w-px bg-[#a0a0a0]" />}
            </span>
          ),
        )}
        <button type="button" aria-label="新工作表" className="ml-8 flex items-center">
          <svg width="21" height="21" viewBox="0 0 21 21" fill="none" stroke="#777" aria-hidden="true">
            <circle cx="10.500" cy="10.500" r="9.500" />
            <path d="M10.500 5.500v10M5.500 10.500h10" strokeWidth="2" />
          </svg>
        </button>
      </div>
      <div className="flex h-[19px] shrink-0 self-center pr-[10px]">
        <span className="mr-[14px] flex items-center">
          <Dots />
        </span>
        <button type="button" aria-label="向左滚动" className="flex h-[19px] w-[19px] items-center justify-center border border-[#c6c6c6] bg-white">
          <svg width="5" height="10" viewBox="0 0 5 10" aria-hidden="true">
            <path d="M5 0v10L0 5z" fill="#555" />
          </svg>
        </button>
        <span className="w-3 border border-[#ababab] bg-white" />
        <button type="button" aria-label="向右滚动" className="ml-[2px] flex h-[19px] w-[19px] items-center justify-center border border-[#c6c6c6] bg-white">
          <svg width="5" height="10" viewBox="0 0 5 10" aria-hidden="true">
            <path d="M0 0v10l5-5z" fill="#555" />
          </svg>
        </button>
      </div>
    </div>
  );
}

function StatusBar() {
  return (
    <footer className="flex h-7 shrink-0 justify-between overflow-hidden border-t border-[#c6c6c6] bg-[#f2f2f2]">
      <p className="pl-[2px] leading-[26px]">就绪</p>
      <div className="flex w-[322px] shrink-0 items-center">
        <button type="button" aria-label="普通" className="flex h-7 w-[42px] shrink-0 items-center justify-center bg-[#c6c6c6]">
          <svg width="17" height="17" viewBox="0 0 17 17" fill="none" stroke="#666" aria-hidden="true">
            <path d="M.5.5h16v16H.5zM.5 5.500h16M.5 11.500h16M5.500.5v16M11.500.5v16" />
          </svg>
        </button>
        <button type="button" aria-label="页面布局" className="flex h-7 w-[42px] shrink-0 items-center justify-center">
          <svg width="17" height="17" viewBox="0 0 17 17" fill="none" stroke="#666" aria-hidden="true">
            <path d="M.5.5h16v16H.5zM4.500 2.500h8v12h-8zM6 5.500h5M6 7.500h5M6 9.500h5M6 11.500h5" />
          </svg>
        </button>
        <button type="button" aria-label="分页预览" className="flex h-7 w-[42px] shrink-0 items-center justify-center">
          <svg width="17" height="17" viewBox="0 0 17 17" fill="none" stroke="#666" aria-hidden="true">
            <path d="M.5.5h16v16H.5zM.5 10.500h10v-10M5.500.5v10" />
          </svg>
        </button>
        <button type="button" aria-label="缩小" className="ml-[5px] flex shrink-0">
          <svg width="10" height="10" viewBox="0 0 10 10" aria-hidden="true">
            <path d="M0 4h10v3H0z" fill="#777" />
          </svg>
        </button>
        <div className="relative mx-1 flex h-4 w-[125px] shrink-0 items-center">
          <span className="absolute left-[62px] h-[7px] w-px bg-[#b0b0b0]" />
          <input
            type="range"
            aria-label="显示比例"
            min={0}
            max={200}
            defaultValue={85}
            className="relative h-4 w-full appearance-none bg-transparent [&::-webkit-slider-runnable-track]:h-px [&::-webkit-slider-runnable-track]:bg-[#b0b0b0] [&::-webkit-slider-thumb]:-mt-[7px] [&::-webkit-slider-thumb]:h-[14px] [&::-webkit-slider-thumb]:w-[6px] [&::-webkit-slider-thumb]:appearance-none [&::-webkit-slider-thumb]:bg-[#777]"
          />
        </div>
        <button type="button" aria-label="放大" className="flex shrink-0">
          <svg width="10" height="10" viewBox="0 0 10 10" aria-hidden="true">
            <path d="M0 4h10v2H0zM4 0h2v10H4z" fill="#666" />
          </svg>
        </button>
        <span className="ml-3 text-[15px]">85%</span>
      </div>
    </footer>
  );
}

export default function App() {
  return (
    <div className="flex min-h-screen flex-col overflow-hidden bg-[#e6e6e6] font-[family-name:'Open_Sans','Noto_Sans_CJK_SC',sans-serif] text-[15px] leading-5 text-[#262626]">
      <Ribbon />
      <FormulaBar />
      <div className="flex flex-1">
        <div className="flex min-w-0 flex-1 items-start border-t border-r border-b border-[#999] bg-white">
          <div className="flex min-w-0 flex-1">
            <Sidebar />
            <Sheet />
          </div>
          <div className="w-[123px] shrink-0" />
        </div>
        <VerticalScroll />
      </div>
      <SheetTabs />
      <StatusBar />
    </div>
  );
}
